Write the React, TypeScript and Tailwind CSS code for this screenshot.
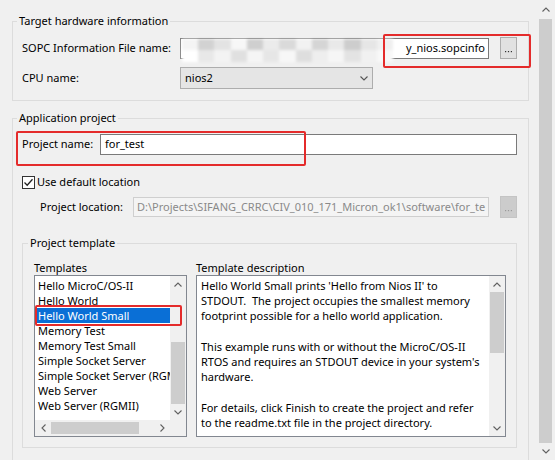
import React from "react";

function ChevUp() {
  return (
    <svg width="8" height="5" viewBox="0 0 8 5">
      <path d="M0.5 4.5 L4 1 L7.5 4.5" fill="none" stroke="#606060" strokeWidth="1.1" />
    </svg>
  );
}
function ChevDown({ color = "#606060" }: { color?: string }) {
  return (
    <svg width="8" height="5" viewBox="0 0 8 5">
      <path d="M0.5 0.5 L4 4 L7.5 0.5" fill="none" stroke={color} strokeWidth="1.1" />
    </svg>
  );
}
function ChevLeft() {
  return (
    <svg width="5" height="8" viewBox="0 0 5 8">
      <path d="M4.5 0.5 L1 4 L4.5 7.5" fill="none" stroke="#606060" strokeWidth="1.1" />
    </svg>
  );
}
function ChevRight() {
  return (
    <svg width="5" height="8" viewBox="0 0 5 8">
      <path d="M0.5 0.5 L4 4 L0.5 7.5" fill="none" stroke="#606060" strokeWidth="1.1" />
    </svg>
  );
}

function DotsButton({ disabled = false }: { disabled?: boolean }) {
  return (
    <div
      className={
        disabled
          ? "ml-[11px] w-[17px] h-[22px] shrink-0 bg-[#cccccc] border border-[#c4c4c4] flex items-end justify-center pb-[5px]"
          : "ml-[11px] w-[17px] h-[22px] shrink-0 bg-[#e1e1e1] border border-[#adadad] flex items-end justify-center pb-[5px]"
      }
    >
      <svg width="7" height="2" viewBox="0 0 7 2">
        <rect x="0" y="0" width="1.2" height="1.2" fill={disabled ? "#9a9a9a" : "#333"} />
        <rect x="2.9" y="0" width="1.2" height="1.2" fill={disabled ? "#9a9a9a" : "#333"} />
        <rect x="5.8" y="0" width="1.2" height="1.2" fill={disabled ? "#9a9a9a" : "#333"} />
      </svg>
    </div>
  );
}

const templates = [
  "Hello MicroC/OS-II",
  "Hello World",
  "Hello World Small",
  "Memory Test",
  "Memory Test Small",
  "Simple Socket Server",
  "Simple Socket Server (RGMII)",
  "Web Server",
  "Web Server (RGMII)",
];

const desc = [
  "Hello World Small prints 'Hello from Nios II' to",
  "STDOUT.  The project occupies the smallest memory",
  "footprint possible for a hello world application.",
  "",
  "This example runs with or without the MicroC/OS-II",
  "RTOS and requires an STDOUT device in your system's",
  "hardware.",
  "",
  "For details, click Finish to create the project and refer",
  "to the readme.txt file in the project directory.",
];

const mosaicTop = ["#f4f4f4", "#d2d2d2", "#e3e3e3", "#f7f7f7", "#cfcfcf", "#ebebeb", "#dadada", "#f2f2f2", "#d5d5d5", "#e9e9e9", "#cdcdcd", "#e6e6e6", "#f0f0f0"];
const mosaicBot = ["#ffffff", "#e8e8e8", "#f3f3f3", "#e0e0e0", "#f5f5f5", "#e6e6e6", "#f7f7f7", "#dedede", "#eeeeee", "#f6f6f6", "#e3e3e3", "#f1f1f1", "#f8f8f8"];

export default function App() {
  return (
    <div className="relative w-[555px] h-[460px] overflow-hidden bg-[#f0f0f0] flex text-[11px] text-black font-['Noto_Sans',sans-serif]">
      {/* main content */}
      <div className="w-[537px] pl-[12px] pr-[8px] pt-[13px] flex flex-col">
        {/* Target hardware information */}
        <fieldset className="border border-[#dcdcdc] px-[4px] pb-[11px]">
          <legend className="px-[2px] leading-[16px]">Target hardware information</legend>
          <div className="pl-[5px] pt-[8px]">
            <div className="flex items-center h-[22px]">
              <div className="w-[158px] whitespace-nowrap">SOPC Information File name:</div>
              <div className="w-[309px] h-[21px] bg-white border border-[#7a7a7a] flex items-center justify-end pr-[3px] overflow-hidden whitespace-nowrap">
                y_nios.sopcinfo
              </div>
              <DotsButton />
            </div>
            <div className="flex items-center h-[22px] mt-[8px]">
              <div className="w-[158px]">CPU name:</div>
              <div className="w-[193px] h-[22px] bg-[#e5e5e5] border border-[#adadad] flex items-center justify-between pl-[4px] pr-[4px]">
                <span>nios2</span>
                <ChevDown color="#555" />
              </div>
            </div>
          </div>
        </fieldset>

        {/* Application project */}
        <fieldset className="mt-[9px] border border-[#dcdcdc] px-[4px] pb-[40px]">
          <legend className="px-[2px] leading-[16px]">Application project</legend>
          <div className="pl-[5px] pr-[7px] pt-[8px]">
            <div className="flex items-center h-[21px]">
              <div className="w-[78px] whitespace-nowrap">Project name:</div>
              <div className="flex-1 h-[21px] bg-white border border-[#7a7a7a] flex items-center pl-[4px]">for_test</div>
            </div>
            <div className="flex items-center h-[15px] mt-[20px]">
              <svg width="13" height="13" viewBox="0 0 13 13" className="shrink-0">
                <rect x="0.5" y="0.5" width="12" height="12" fill="#fff" stroke="#333" />
                <path d="M2.5 6.5 L5.2 9.2 L10.5 3.2" fill="none" stroke="#222" strokeWidth="1.3" />
              </svg>
              <span className="ml-[2px]">Use default location</span>
            </div>
            <div className="flex items-center h-[22px] mt-[6px] pl-[18px]">
              <div className="w-[93px] whitespace-nowrap">Project location:</div>
              <div className="w-[356px] h-[20px] bg-[#f4f4f4] border border-[#cfcfcf] flex items-center pl-[3px] overflow-hidden whitespace-nowrap text-[#8a8a8a]">
                D:\Projects\SIFANG_CRRC\CIV_010_171_Micron_ok1\software\for_te
              </div>
              <DotsButton disabled />
            </div>

            {/* Project template */}
            <fieldset className="mt-[17px] border border-[#dcdcdc] px-[5px] pb-[10px]">
              <legend className="px-[2px] leading-[16px]">Project template</legend>
              <div className="pl-[6px] pr-[5px] flex gap-[9px] mt-[9px]">
                {/* Templates */}
                <div className="w-[153px] flex flex-col">
                  <div className="leading-[15px] h-[15px]">Templates</div>
                  <div className="h-[162px] bg-white border border-[#828790] flex flex-col">
                    <div className="flex h-[144px]">
                      <div className="flex-1 overflow-hidden pt-[2px] pl-[1px]">
                        {templates.map((t) => (
                          <div
                            key={t}
                            className={
                              t === "Hello World Small"
                                ? "h-[15px] leading-[15px] pl-[2px] whitespace-nowrap bg-[#0a6fd6] text-white"
                                : "h-[15px] leading-[15px] pl-[2px] whitespace-nowrap"
                            }
                          >
                            {t}
                          </div>
                        ))}
                      </div>
                      <div className="w-[16px] bg-[#f0f0f0] flex flex-col items-center">
                        <div className="h-[16px] flex items-center justify-center"><ChevUp /></div>
                        <div className="flex-1 flex flex-col w-full px-[1px]">
                          <div className="h-[50px]" />
                          <div className="flex-1 bg-[#cdcdcd]" />
                        </div>
                        <div className="h-[16px] flex items-center justify-center"><ChevDown /></div>
                      </div>
                    </div>
                    <div className="flex h-[16px]">
                      <div className="flex-1 bg-[#f0f0f0] flex items-center">
                        <div className="w-[16px] flex items-center justify-center"><ChevLeft /></div>
                        <div className="w-[88px] h-[12px] bg-[#cdcdcd]" />
                        <div className="flex-1" />
                        <div className="w-[16px] flex items-center justify-center"><ChevRight /></div>
                      </div>
                      <div className="w-[16px] bg-[#f0f0f0]" />
                    </div>
                  </div>
                </div>
                {/* Template description */}
                <div className="flex-1 flex flex-col">
                  <div className="leading-[15px] h-[15px] whitespace-nowrap">Template description</div>
                  <div className="h-[162px] bg-white border border-[#828790] flex">
                    <div className="flex-1 overflow-hidden pl-[4px] pt-[2px]">
                      {desc.map((l, i) => (
                        <div key={i} className="h-[15.2px] leading-[15.2px] whitespace-pre">
                          {l}
                        </div>
                      ))}
                    </div>
                    <div className="w-[16px] bg-[#f0f0f0] flex flex-col items-center">
                      <div className="h-[16px] flex items-center justify-center"><ChevUp /></div>
                      <div className="flex-1 flex flex-col w-full px-[1px]">
                        <div className="h-[61px] bg-[#cdcdcd]" />
                      </div>
                      <div className="h-[16px] flex items-center justify-center"><ChevDown /></div>
                    </div>
                  </div>
                </div>
              </div>
            </fieldset>
          </div>
        </fieldset>
      </div>

      {/* main scrollbar */}
      <div className="w-[18px] h-full flex flex-col pl-[2px] pr-[3px]">
        <div className="h-[19px] flex items-center justify-center"><ChevUp /></div>
        <div className="flex-1 bg-[#cdcdcd]" />
        <div className="h-[17px] flex items-center justify-center"><ChevDown /></div>
      </div>

      {/* blurred (mosaic) part of the SOPC file path */}
      <div className="absolute left-[182px] top-[39px] w-[211px] h-[23px] flex flex-col blur-[1.5px]">
        <div className="flex h-[11px]">
          {mosaicTop.map((c, i) => (
            <div key={i} className="flex-1" style={{ background: c }} />
          ))}
        </div>
        <div className="flex h-[12px]">
          {mosaicBot.map((c, i) => (
            <div key={i} className="flex-1" style={{ background: c }} />
          ))}
        </div>
      </div>

      {/* red annotation boxes */}
      <div className="absolute left-[383px] top-[34px] w-[148px] h-[34px] border-[2.5px] border-[#e42b2b] rounded-[2px]" />
      <div className="absolute left-[16px] top-[131px] w-[290px] h-[35px] border-[2.5px] border-[#e42b2b] rounded-[2px]" />
      <div className="absolute left-[35px] top-[305px] w-[147px] h-[21px] border-[2.5px] border-[#e42b2b] rounded-[2px]" />
    </div>
  );
}
